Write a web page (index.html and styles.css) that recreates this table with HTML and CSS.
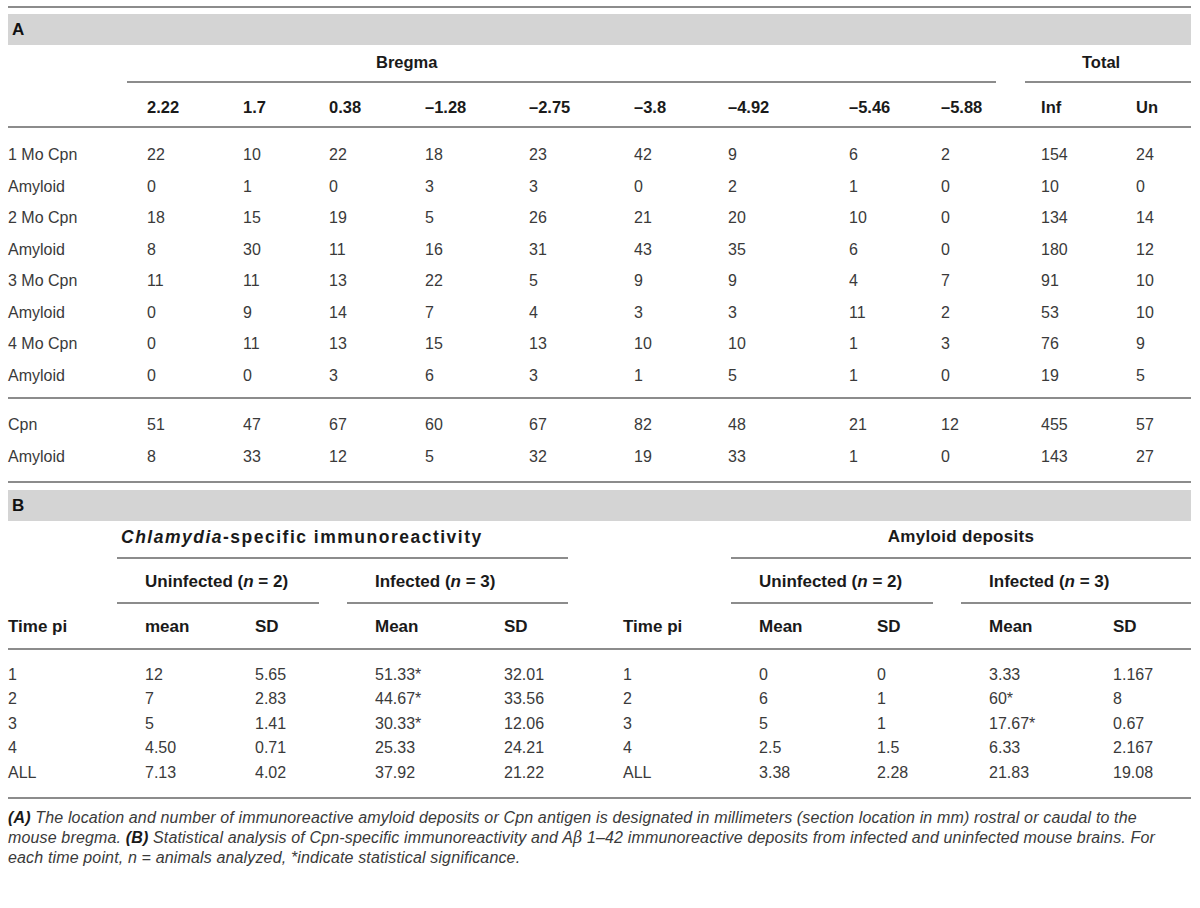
FILE: index.html
```html
<!DOCTYPE html>
<html>
<head>
<meta charset="utf-8">
<link rel="stylesheet" href="styles.css">
</head>
<body>
<div class="page">
  <div class="rule"></div>
  <div class="band">A</div>
  <table class="ta">
    <colgroup>
      <col class="w119"><col class="w96"><col class="w86"><col class="w96"><col class="w104"><col class="w105"><col class="w94"><col class="w121"><col class="w92"><col class="w100"><col class="w95"><col class="w75">
    </colgroup>
    <thead>
      <tr>
        <td></td>
        <th colspan="9"><div class="grp grp-bregma">Bregma</div></th>
        <th colspan="2"><div class="grp grp-total">Total</div></th>
      </tr>
      <tr class="colhead">
        <th class="lbl"></th>
        <th>2.22</th><th>1.7</th><th>0.38</th><th>–1.28</th><th>–2.75</th><th>–3.8</th><th>–4.92</th><th>–5.46</th><th>–5.88</th><th>Inf</th><th>Un</th>
      </tr>
    </thead>
    <tbody>
      <tr class="first"><td class="lbl">1 Mo Cpn</td><td>22</td><td>10</td><td>22</td><td>18</td><td>23</td><td>42</td><td>9</td><td>6</td><td>2</td><td>154</td><td>24</td></tr>
      <tr><td class="lbl">Amyloid</td><td>0</td><td>1</td><td>0</td><td>3</td><td>3</td><td>0</td><td>2</td><td>1</td><td>0</td><td>10</td><td>0</td></tr>
      <tr><td class="lbl">2 Mo Cpn</td><td>18</td><td>15</td><td>19</td><td>5</td><td>26</td><td>21</td><td>20</td><td>10</td><td>0</td><td>134</td><td>14</td></tr>
      <tr><td class="lbl">Amyloid</td><td>8</td><td>30</td><td>11</td><td>16</td><td>31</td><td>43</td><td>35</td><td>6</td><td>0</td><td>180</td><td>12</td></tr>
      <tr><td class="lbl">3 Mo Cpn</td><td>11</td><td>11</td><td>13</td><td>22</td><td>5</td><td>9</td><td>9</td><td>4</td><td>7</td><td>91</td><td>10</td></tr>
      <tr><td class="lbl">Amyloid</td><td>0</td><td>9</td><td>14</td><td>7</td><td>4</td><td>3</td><td>3</td><td>11</td><td>2</td><td>53</td><td>10</td></tr>
      <tr><td class="lbl">4 Mo Cpn</td><td>0</td><td>11</td><td>13</td><td>15</td><td>13</td><td>10</td><td>10</td><td>1</td><td>3</td><td>76</td><td>9</td></tr>
      <tr class="last"><td class="lbl">Amyloid</td><td>0</td><td>0</td><td>3</td><td>6</td><td>3</td><td>1</td><td>5</td><td>1</td><td>0</td><td>19</td><td>5</td></tr>
    </tbody>
    <tbody class="sum">
      <tr class="first"><td class="lbl">Cpn</td><td>51</td><td>47</td><td>67</td><td>60</td><td>67</td><td>82</td><td>48</td><td>21</td><td>12</td><td>455</td><td>57</td></tr>
      <tr class="last"><td class="lbl">Amyloid</td><td>8</td><td>33</td><td>12</td><td>5</td><td>32</td><td>19</td><td>33</td><td>1</td><td>0</td><td>143</td><td>27</td></tr>
    </tbody>
  </table>

  <div class="band band-b">B</div>
  <table class="tb">
    <colgroup>
      <col class="w109"><col class="w110"><col class="w120"><col class="w129"><col class="w119"><col class="w136"><col class="w118"><col class="w112"><col class="w124"><col class="w106">
    </colgroup>
    <thead>
      <tr>
        <td></td>
        <th colspan="4"><div class="bgrp top-left"><i>Chlamydia</i>-specific immunoreactivity</div></th>
        <td></td>
        <th colspan="4"><div class="bgrp top-right">Amyloid deposits</div></th>
      </tr>
      <tr>
        <td></td>
        <th colspan="2"><div class="bgrp sub">Uninfected (<i>n</i> = 2)</div></th>
        <th colspan="2"><div class="bgrp sub sub-mid">Infected (<i>n</i> = 3)</div></th>
        <td></td>
        <th colspan="2"><div class="bgrp sub">Uninfected (<i>n</i> = 2)</div></th>
        <th colspan="2"><div class="bgrp sub sub-end">Infected (<i>n</i> = 3)</div></th>
      </tr>
      <tr class="colhead">
        <th class="lbl">Time pi</th><th>mean</th><th>SD</th><th>Mean</th><th>SD</th>
        <th>Time pi</th><th>Mean</th><th>SD</th><th>Mean</th><th>SD</th>
      </tr>
    </thead>
    <tbody>
      <tr class="first"><td class="lbl">1</td><td>12</td><td>5.65</td><td>51.33*</td><td>32.01</td><td>1</td><td>0</td><td>0</td><td>3.33</td><td>1.167</td></tr>
      <tr><td class="lbl">2</td><td>7</td><td>2.83</td><td>44.67*</td><td>33.56</td><td>2</td><td>6</td><td>1</td><td>60*</td><td>8</td></tr>
      <tr><td class="lbl">3</td><td>5</td><td>1.41</td><td>30.33*</td><td>12.06</td><td>3</td><td>5</td><td>1</td><td>17.67*</td><td>0.67</td></tr>
      <tr><td class="lbl">4</td><td>4.50</td><td>0.71</td><td>25.33</td><td>24.21</td><td>4</td><td>2.5</td><td>1.5</td><td>6.33</td><td>2.167</td></tr>
      <tr class="last"><td class="lbl">ALL</td><td>7.13</td><td>4.02</td><td>37.92</td><td>21.22</td><td>ALL</td><td>3.38</td><td>2.28</td><td>21.83</td><td>19.08</td></tr>
    </tbody>
  </table>

  <p class="note"><b>(A)</b> The location and number of immunoreactive amyloid deposits or Cpn antigen is designated in millimeters (section location in mm) rostral or caudal to the<br>mouse bregma. <b>(B)</b> Statistical analysis of Cpn-specific immunoreactivity and A<span class="beta">β</span> 1–42 immunoreactive deposits from infected and uninfected mouse brains. For<br>each time point, n = animals analyzed, *indicate statistical significance.</p>
</div>
</body>
</html>
```

FILE: styles.css
```css
body {
  margin: 0;
  background: #ffffff;
  font-family: "Liberation Sans", Arial, sans-serif;
  color: #3a3a3a;
}

.page {
  width: 1183px;
  padding: 6px 0 0 8px;
}

.rule {
  height: 2px;
  background: #8c8c8c;
}

.band {
  margin-top: 6px;
  height: 31px;
  line-height: 31px;
  padding-left: 4px;
  background: #d4d4d4;
  font-weight: bold;
  font-size: 17px;
  color: #111111;
}

.band-b {
  margin-top: 7px;
}

table {
  width: 1183px;
  border-collapse: collapse;
  table-layout: fixed;
  font-size: 16px;
}

th {
  padding: 0;
  text-align: left;
  font-weight: bold;
  font-size: 16.5px;
  color: #1a1a1a;
}

td {
  padding: 0;
  white-space: nowrap;
}

.w75 { width: 75px; }
.w86 { width: 86px; }
.w92 { width: 92px; }
.w94 { width: 94px; }
.w95 { width: 95px; }
.w96 { width: 96px; }
.w100 { width: 100px; }
.w104 { width: 104px; }
.w105 { width: 105px; }
.w106 { width: 106px; }
.w109 { width: 109px; }
.w110 { width: 110px; }
.w112 { width: 112px; }
.w118 { width: 118px; }
.w119 { width: 119px; }
.w120 { width: 120px; }
.w121 { width: 121px; }
.w124 { width: 124px; }
.w129 { width: 129px; }
.w136 { width: 136px; }

/* ---------- Table A ---------- */
.grp {
  padding: 7px 0 9px;
  line-height: 20px;
  border-bottom: 2px solid #8c8c8c;
}

.grp-bregma {
  margin-right: 25px;
  padding-left: 249px;
}

.grp-total {
  margin-left: 4px;
  padding-right: 14px;
  text-align: center;
}

.ta .colhead th {
  padding: 14px 0 9px 20px;
  line-height: 20px;
  border-bottom: 2px solid #8c8c8c;
}

.ta .colhead th.lbl {
  padding-left: 0;
}

.ta td {
  padding-left: 20px;
  line-height: 31.5px;
}

.ta td.lbl {
  padding-left: 0;
}

.ta tr.first td {
  padding-top: 11px;
}

.ta tr.last td {
  padding-bottom: 6px;
  border-bottom: 2px solid #8c8c8c;
}

.ta .sum td {
  line-height: 32px;
}

.ta .sum tr.first td {
  padding-top: 10px;
}

.ta .sum tr.last td {
  padding-bottom: 8px;
}

/* ---------- Table B ---------- */
.tb th {
  font-size: 17px;
}

.bgrp {
  line-height: 20px;
  border-bottom: 2px solid #8c8c8c;
}

.top-left {
  padding: 6px 0 10px 4px;
  margin-right: 27px;
  font-size: 17.5px;
  letter-spacing: 1.5px;
}

.top-right {
  padding: 6px 0 10px;
  text-align: center;
  letter-spacing: 0.3px;
}

.sub {
  padding: 13px 0 10px 28px;
  margin-right: 28px;
}

.sub-mid {
  margin-right: 27px;
}

.sub-end {
  margin-right: 0;
}

.tb .colhead th {
  padding: 13px 0 11px 28px;
  line-height: 20px;
  border-bottom: 2px solid #8c8c8c;
}

.tb .colhead th.lbl {
  padding-left: 0;
}

.tb td {
  padding-left: 28px;
  line-height: 24.5px;
}

.tb td.lbl {
  padding-left: 0;
}

.tb tr.first td {
  padding-top: 12.75px;
}

.tb tr.last td {
  padding-bottom: 11.75px;
  border-bottom: 2px solid #8c8c8c;
}

/* ---------- Footnote ---------- */
.note {
  margin: 9px 0 0;
  font-size: 16px;
  letter-spacing: 0.15px;
  line-height: 20px;
  font-style: italic;
  color: #3a3a3a;
  white-space: nowrap;
}

.note b {
  color: #1a1a1a;
}

.beta {
  font-family: "DejaVu Serif", "Liberation Serif", serif;
}
```
